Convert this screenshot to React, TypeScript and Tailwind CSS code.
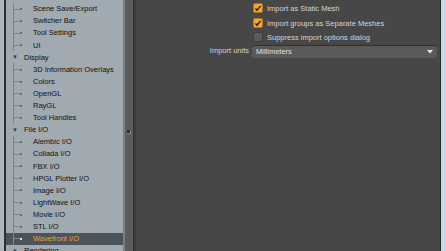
import React from 'react'

type TreeItem = {
    label: string
    kind: 'cat' | 'leaf'
    selected?: boolean
}

const items: TreeItem[] = [
    { label: 'Scene Save/Export', kind: 'leaf' },
    { label: 'Switcher Bar', kind: 'leaf' },
    { label: 'Tool Settings', kind: 'leaf' },
    { label: 'UI', kind: 'leaf' },
    { label: 'Display', kind: 'cat' },
    { label: '3D Information Overlays', kind: 'leaf' },
    { label: 'Colors', kind: 'leaf' },
    { label: 'OpenGL', kind: 'leaf' },
    { label: 'RayGL', kind: 'leaf' },
    { label: 'Tool Handles', kind: 'leaf' },
    { label: 'File I/O', kind: 'cat' },
    { label: 'Alembic I/O', kind: 'leaf' },
    { label: 'Collada I/O', kind: 'leaf' },
    { label: 'FBX I/O', kind: 'leaf' },
    { label: 'HPGL Plotter I/O', kind: 'leaf' },
    { label: 'Image I/O', kind: 'leaf' },
    { label: 'LightWave I/O', kind: 'leaf' },
    { label: 'Movie I/O', kind: 'leaf' },
    { label: 'STL I/O', kind: 'leaf' },
    { label: 'Wavefront I/O', kind: 'leaf', selected: true },
    { label: 'Rendering', kind: 'cat' },
]

const TreeRow = ({ item }: { item: TreeItem }) => {
    if (item.kind === 'cat') {
        return (
            <div className="flex h-[12.1px] shrink-0 items-center">
                <span className="ml-[6px] w-[12px] text-[6px] leading-none text-[#3a4048]">▼</span>
                <span className="text-[#111]">{item.label}</span>
            </div>
        )
    }
    return (
        <div
            className={`relative flex h-[12.1px] shrink-0 items-center ${item.selected ? 'bg-[#4b535b]' : ''}`}
        >
            <div className="absolute left-[7px] top-0 h-full w-px bg-[#7d858d]" />
            <div className="ml-[8px] h-px w-[6px] bg-[#7d858d]" />
            <div className={`h-[2px] w-[2px] ${item.selected ? 'bg-[#d8dde2]' : 'bg-[#6a7179]'}`} />
            <span className={`ml-[11px] ${item.selected ? 'text-[#f0a030]' : 'text-[#111]'}`}>
                {item.label}
            </span>
        </div>
    )
}

const Check = ({ checked }: { checked: boolean }) => (
    <div
        className={`flex h-[10px] w-[10px] items-center justify-center rounded-[2px] border ${
            checked ? 'border-[#b87414] bg-[#f3a533]' : 'border-[#3e3e3e] bg-[#5b5b5b]'
        }`}
    >
        {checked && (
            <svg width="8" height="8" viewBox="0 0 8 8">
                <path d="M1.5 4.5 L3 6.2 L6.6 1.8" stroke="#1a1a1a" strokeWidth="1.3" fill="none" />
            </svg>
        )}
    </div>
)

const App = () => {
    return (
        <div
            className="flex h-[251px] w-[446px] overflow-hidden bg-[#474747] text-[7.5px] leading-none"
            style={{ fontFamily: '"Liberation Sans", Arial, sans-serif' }}
        >
            <div className="w-[4px] bg-[#b0b7be]" />
            <div className="w-[2px] bg-[#2c3034]" />
            <div className="flex w-[117px] flex-col bg-[#a1a9b1] pt-[3px]">
                {items.map((item, i) => (
                    <TreeRow key={i} item={item} />
                ))}
            </div>
            <div className="w-[2px] bg-[#7b7f84]" />
            <div className="flex w-[8px] flex-col items-center justify-center bg-[#5c5c5c] pr-[1px]">
                <div className="mt-[12px] h-[4px] w-[4px] border-b border-r border-[#8a8a8a] bg-[#2e2e2e]" />
            </div>
            <div className="w-[1px] bg-[#333]" />
            <div className="w-[2px] bg-[#3c3c3c]" />
            <div className="flex flex-1 flex-col pt-[3px] text-[#d4d4d4]">
                <div className="ml-[117px] flex h-[14.5px] items-start gap-[4px]">
                    <Check checked />
                    <span className="mt-[2px]">Import as Static Mesh</span>
                </div>
                <div className="ml-[117px] flex h-[14.5px] items-start gap-[4px]">
                    <Check checked />
                    <span className="mt-[2px]">Import groups as Separate Meshes</span>
                </div>
                <div className="ml-[117px] flex h-[12.5px] items-start gap-[4px]">
                    <Check checked={false} />
                    <span className="mt-[2px]">Suppress import options dialog</span>
                </div>
                <div className="flex items-center">
                    <span className="w-[116px] pr-[3px] text-right">Import units</span>
                    <div className="flex h-[13px] w-[185px] items-center justify-between rounded-[3px] border-t border-[#2e2e2e] bg-[#5a5a5a] pl-[4px] pr-[4px]">
                        <span className="text-[#e0e0e0]">Millimeters</span>
                        <svg width="6" height="4" viewBox="0 0 6 4">
                            <path d="M0 0 L6 0 L3 3.5 Z" fill="#e6e6e6" />
                        </svg>
                    </div>
                </div>
            </div>
            <div className="w-[1px] bg-[#2a2a2a]" />
            <div className="w-[5px] bg-[#c9d9e8]" />
        </div>
    )
}

export default App
